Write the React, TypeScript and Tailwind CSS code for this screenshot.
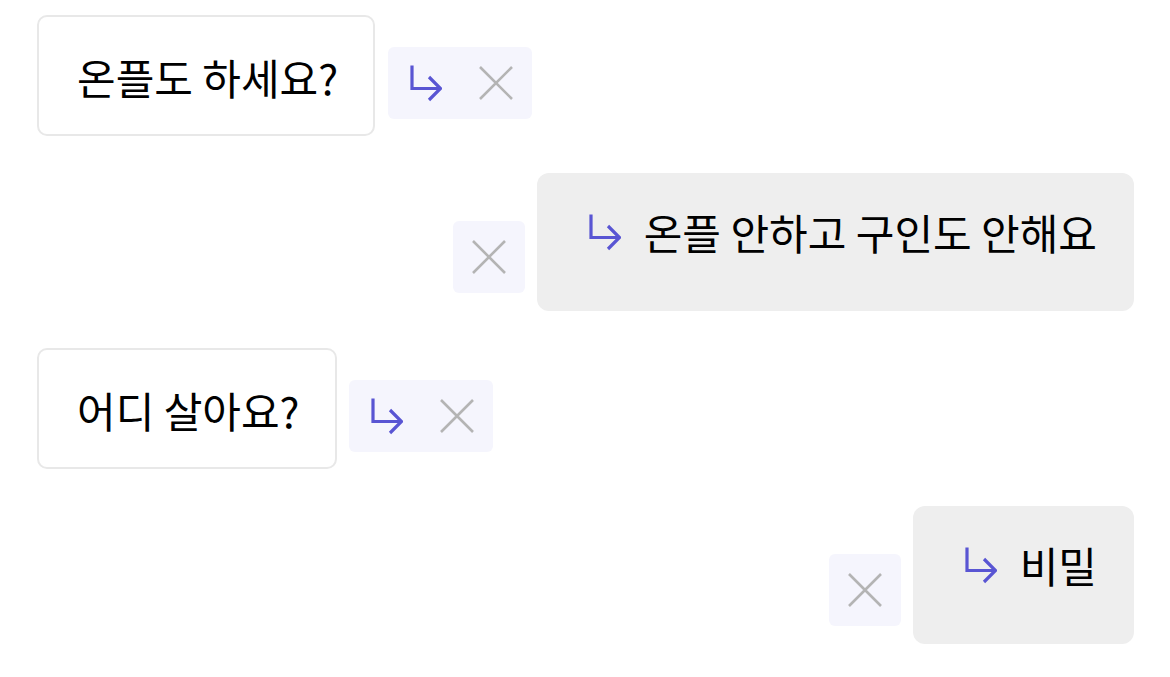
import { ReactNode } from 'react'

const font = { fontFamily: '"Noto Sans CJK KR", "Noto Sans", sans-serif' }

const ReplyArrow = () => (
  <svg width="36" height="38" viewBox="0 0 36 38" fill="none" className="flex-shrink-0">
    <path d="M6 1.5V24.5H34" stroke="#5955d3" strokeWidth="3.2" strokeLinejoin="miter" />
    <path d="M23 13L34.5 24.5L23 36" stroke="#5955d3" strokeWidth="3.2" strokeLinejoin="miter" />
  </svg>
)

const CloseX = () => (
  <svg width="36" height="36" viewBox="0 0 36 36" fill="none" className="flex-shrink-0">
    <path d="M2 2L34 34M34 2L2 34" stroke="#b4b4b4" strokeWidth="2.6" />
  </svg>
)

const Question = ({ children }: { children: ReactNode }) => (
  <div className="flex h-[121px] items-center rounded-[10px] border-2 border-[#e8e8e8] bg-white pl-[38px] pr-[35px] pt-[2px]">
    <span className="text-[42px] leading-none text-black" style={font}>
      {children}
    </span>
  </div>
)

const ActionPill = () => (
  <div className="mb-[17px] flex h-[72px] items-center gap-[36px] rounded-[6px] bg-[#f5f5fd] pl-[18px] pr-[18px]">
    <ReplyArrow />
    <CloseX />
  </div>
)

const Answer = ({ children }: { children: ReactNode }) => (
  <div className="flex h-[138px] items-center gap-[23px] rounded-[12px] bg-[#eeeeee] pb-[20px] pl-[48px] pr-[37px]">
    <ReplyArrow />
    <span className="text-[42px] leading-none text-black" style={font}>
      {children}
    </span>
  </div>
)

const ClosePill = () => (
  <div className="mb-[18px] flex h-[72px] w-[72px] items-center justify-center rounded-[6px] bg-[#f5f5fd]">
    <CloseX />
  </div>
)

export default function App() {
  return (
    <main className="min-h-[677px] w-[1170px] bg-white pl-[37px] pr-[36px] pt-[15px]">
      <div className="flex flex-col gap-[37px]">
        <div className="flex items-end gap-[13px]">
          <Question>온플도 하세요?</Question>
          <ActionPill />
        </div>
        <div className="flex items-end justify-end gap-[12px]">
          <ClosePill />
          <Answer>온플 안하고 구인도 안해요</Answer>
        </div>
        <div className="flex items-end gap-[12px]">
          <Question>어디 살아요?</Question>
          <ActionPill />
        </div>
        <div className="flex items-end justify-end gap-[12px]">
          <ClosePill />
          <Answer>비밀</Answer>
        </div>
      </div>
    </main>
  )
}
